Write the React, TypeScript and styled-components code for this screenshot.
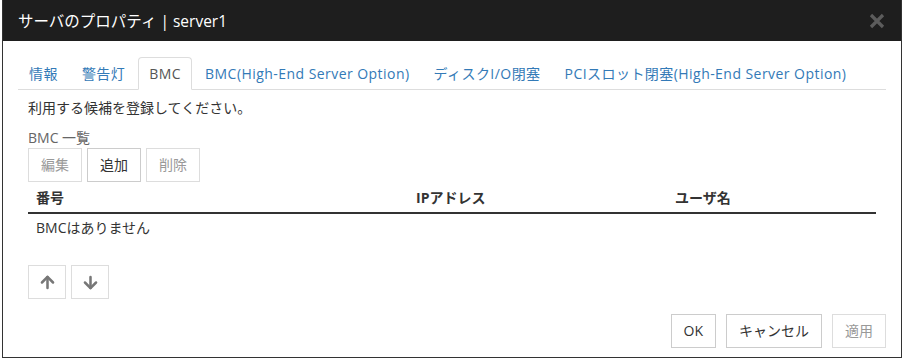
import React from 'react';
import styled, {createGlobalStyle} from 'styled-components';
import {ArrowUp, ArrowDown} from 'lucide-react';

const GlobalStyle = createGlobalStyle`
  body {
    margin: 0;
    background: #fff;
    font-family: "Open Sans", "Noto Sans CJK JP", sans-serif;
    font-size: 14px;
    line-height: 20px;
    color: #333;
  }
`;

const Dialog = styled.div`
  box-sizing: border-box;
  width: 900px;
  height: 358px;
  margin-left: 2px;
  border: 1px solid #333;
  border-top: none;
  display: flex;
  flex-direction: column;
  background: #fff;
`;

const Header = styled.div`
  height: 41px;
  flex-shrink: 0;
  background: #1e1e1e;
  display: flex;
  align-items: center;
  justify-content: space-between;
  padding: 0 16px 0 15px;
`;

const Title = styled.div`
  color: #fff;
  font-size: 15.5px;
`;

const Close = styled.button`
  border: none;
  background: none;
  padding: 0;
  width: 16px;
  height: 16px;
  display: flex;
`;

const Body = styled.div`
  flex: 1;
  padding: 16px 15px 0;
  display: flex;
  flex-direction: column;
`;

const Tabs = styled.div`
  display: flex;
  border-bottom: 1px solid #ddd;
  letter-spacing: 0.45px;
`;

const Tab = styled.div<{$active?: boolean}>`
  height: 31px;
  padding: 0 10px;
  margin-right: 2px;
  margin-bottom: -1px;
  display: flex;
  align-items: center;
  border: 1px solid ${p => (p.$active ? '#ddd' : 'transparent')};
  border-bottom-color: ${p => (p.$active ? '#fff' : 'transparent')};
  border-radius: 4px 4px 0 0;
  background: ${p => (p.$active ? '#fff' : 'transparent')};
  color: ${p => (p.$active ? '#555' : '#337ab7')};
  white-space: nowrap;
`;

const Pane = styled.div`
  padding: 8px 10px 0;
`;

const Intro = styled.div`
  margin-bottom: 10px;
`;

const Label = styled.div`
  color: #666;
`;

const Toolbar = styled.div`
  display: flex;
  gap: 5px;
`;

const Button = styled.button<{$disabled?: boolean}>`
  box-sizing: border-box;
  height: 34px;
  padding: 0 12px;
  font: inherit;
  background: #fff;
  border: 1px solid ${p => (p.$disabled ? '#ddd' : '#ccc')};
  color: ${p => (p.$disabled ? '#999' : '#333')};
  display: flex;
  align-items: center;
  justify-content: center;
`;

const IconButton = styled(Button)`
  width: 38px;
  padding: 0;
  color: #777;
`;

const Table = styled.div`
  display: grid;
  grid-template-columns: 380px 259px 1fr;
`;

const HeadCell = styled.div`
  padding: 6px 8px 4px;
  font-weight: bold;
  border-bottom: 2px solid #333;
`;

const EmptyRow = styled.div`
  grid-column: 1 / -1;
  padding: 4px 8px;
`;

const MoveBar = styled(Toolbar)`
  margin-top: 23px;
`;

const Footer = styled.div`
  margin-top: 15px;
  display: flex;
  justify-content: flex-end;
  gap: 10px;
`;

const tabs = ['情報', '警告灯', 'BMC', 'BMC(High-End Server Option)', 'ディスクI/O閉塞', 'PCIスロット閉塞(High-End Server Option)'];

const App = () => (
  <>
    <GlobalStyle />
    <Dialog>
      <Header>
        <Title>サーバのプロパティ | server1</Title>
        <Close aria-label="close">
          <svg width="16" height="16" viewBox="0 0 16 16">
            <path d="M2 2 L14 14 M14 2 L2 14" stroke="#5c5c5c" strokeWidth="3.2" />
          </svg>
        </Close>
      </Header>
      <Body>
        <Tabs>
          {tabs.map(t => (
            <Tab key={t} $active={t === 'BMC'}>
              {t}
            </Tab>
          ))}
        </Tabs>
        <Pane>
          <Intro>利用する候補を登録してください。</Intro>
          <Label>BMC 一覧</Label>
          <Toolbar>
            <Button $disabled>編集</Button>
            <Button>追加</Button>
            <Button $disabled>削除</Button>
          </Toolbar>
          <Table>
            <HeadCell>番号</HeadCell>
            <HeadCell>IPアドレス</HeadCell>
            <HeadCell>ユーザ名</HeadCell>
            <EmptyRow>BMCはありません</EmptyRow>
          </Table>
          <MoveBar>
            <IconButton $disabled>
              <ArrowUp size={19} strokeWidth={3.2} />
            </IconButton>
            <IconButton $disabled>
              <ArrowDown size={19} strokeWidth={3.2} />
            </IconButton>
          </MoveBar>
        </Pane>
        <Footer>
          <Button>OK</Button>
          <Button>キャンセル</Button>
          <Button $disabled>適用</Button>
        </Footer>
      </Body>
    </Dialog>
  </>
);

export default App;
